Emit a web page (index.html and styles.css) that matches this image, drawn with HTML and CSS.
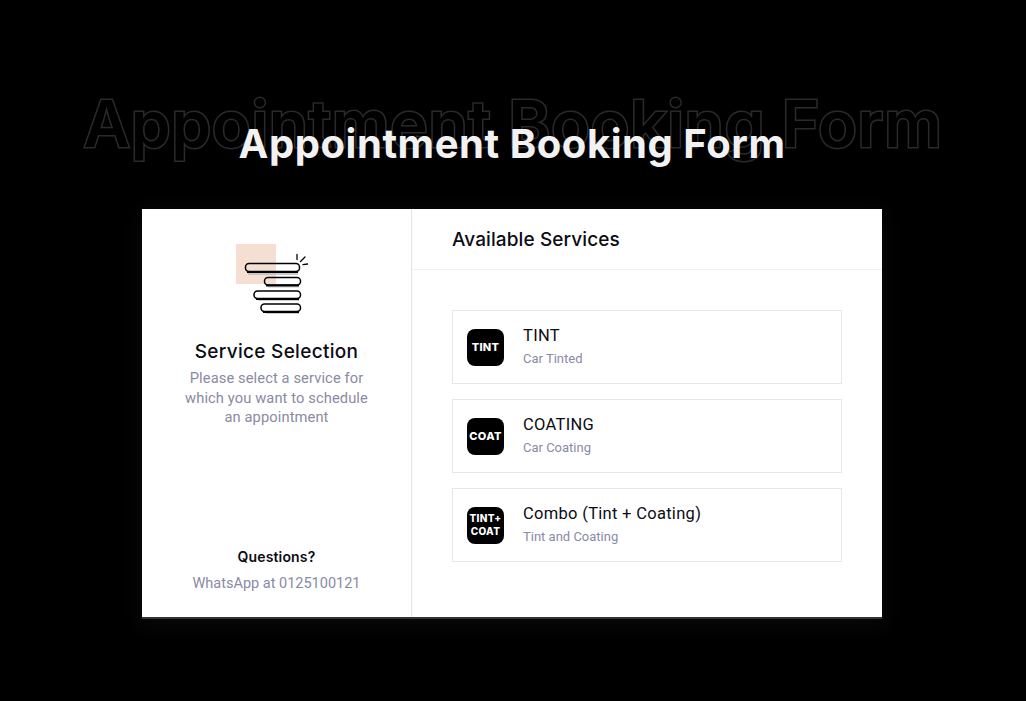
FILE: index.html
```html
<!DOCTYPE html>
<html lang="en">
<head>
<meta charset="utf-8">
<title>Appointment Booking Form</title>
<link rel="stylesheet" href="styles.css">
</head>
<body>
<main class="page">
  <header class="title-block">
    <div class="title-ghost" aria-hidden="true">Appointment Booking Form</div>
    <h1 class="title">Appointment Booking Form</h1>
  </header>
  <section class="card">
    <aside class="side">
      <div class="side-top">
        <svg class="side-icon" width="76" height="72" viewBox="0 0 76 72" aria-hidden="true">
          <rect x="0" y="0" width="40" height="40" fill="#f5dfd3"/>
          <path d="M12 30H62" stroke="#bbb" stroke-width="1.500" fill="none"/>
          <path d="M32 43H63M22 56.500H63M30 69.500H63" stroke="#ccc" stroke-width="1.200" fill="none"/>
          <rect x="9.500" y="19.500" width="54" height="8" rx="3.500" fill="none" stroke="#000" stroke-width="1.500"/>
          <path d="M11 28H62" stroke="#000" stroke-width="2.200" fill="none"/>
          <rect x="28.500" y="33.500" width="36" height="7.500" rx="3.500" fill="none" stroke="#000" stroke-width="1.500"/>
          <path d="M30 41.500H63" stroke="#000" stroke-width="2" fill="none"/>
          <rect x="18" y="47" width="46.500" height="7.500" rx="3.500" fill="none" stroke="#000" stroke-width="1.500"/>
          <path d="M20 55H63" stroke="#000" stroke-width="2" fill="none"/>
          <rect x="25" y="60" width="39.500" height="7.500" rx="3.500" fill="none" stroke="#000" stroke-width="1.500"/>
          <path d="M27 68H63" stroke="#000" stroke-width="2" fill="none"/>
          <path d="M61 10.500V15.500M69 13L64.500 17.500M71.500 20L67 20.700" stroke="#000" stroke-width="1.300" stroke-linecap="round" fill="none"/>
        </svg>
        <h2 class="side-title">Service Selection</h2>
        <p class="side-text">Please select a service for which you want to schedule an appointment</p>
      </div>
      <div class="side-bottom">
        <h3 class="questions">Questions?</h3>
        <p class="whatsapp">WhatsApp at 0125100121</p>
      </div>
    </aside>
    <div class="content">
      <h2 class="content-head">Available Services</h2>
      <ul class="services">
        <li class="service">
          <div class="badge">TINT</div>
          <div class="service-text">
            <div class="service-name">TINT</div>
            <div class="service-sub">Car Tinted</div>
          </div>
        </li>
        <li class="service">
          <div class="badge">COAT</div>
          <div class="service-text">
            <div class="service-name">COATING</div>
            <div class="service-sub">Car Coating</div>
          </div>
        </li>
        <li class="service">
          <div class="badge badge-two">TINT+<br>COAT</div>
          <div class="service-text">
            <div class="service-name">Combo (Tint + Coating)</div>
            <div class="service-sub">Tint and Coating</div>
          </div>
        </li>
      </ul>
    </div>
  </section>
</main>
</body>
</html>
```
FILE: styles.css
```css
* { box-sizing: border-box; }
html, body { margin: 0; padding: 0; }
body {
  background: #000;
  height: 701px;
  overflow: hidden;
  font-family: Roboto, "Liberation Sans", sans-serif;
}
.page { width: 1026px; padding-top: 84px; }
.title-block {
  position: relative;
  width: 1026px;
  height: 125px;
  text-align: center;
}
.title {
  position: relative;
  margin: 0;
  padding-top: 35px;
  padding-right: 2px;
  color: #f2f2f2;
  font: 700 40px/50px Inter, sans-serif;
  letter-spacing: 0.550px;
}
.title-ghost {
  position: absolute;
  left: 0;
  right: 0;
  top: 0;
  color: #000;
  -webkit-text-stroke: 3px #2a2a2a;
  paint-order: stroke fill;
  font: 600 64px/80px Inter, sans-serif;
  letter-spacing: 0.620px;
  white-space: nowrap;
}
.card {
  display: flex;
  width: 740px;
  height: 410px;
  margin-left: 142px;
  background: #fff;
  border-bottom: 2px solid #333;
  box-shadow: 0 4px 24px rgba(255, 255, 255, 0.05);
}
.side {
  width: 270px;
  flex: none;
  border-right: 1px solid #e3e3e3;
  display: flex;
  flex-direction: column;
  justify-content: space-between;
  align-items: center;
  text-align: center;
  padding: 35px 36px 23px;
}
.side-top { display: flex; flex-direction: column; align-items: center; }
.side-icon { display: block; margin-left: -5px; }
.side-title {
  margin: 24px 0 0;
  color: #0c0c14;
  font: 500 19px/24px Inter, sans-serif;
  letter-spacing: 0.300px;
}
.side-text {
  margin: 5px 0 0;
  color: #8a8aa2;
  font-size: 14.700px;
  line-height: 19.500px;
  letter-spacing: 0.100px;
}
.questions {
  margin: 0;
  color: #0c0c14;
  font: 600 14px/20px Inter, sans-serif;
  letter-spacing: 0.150px;
}
.whatsapp {
  margin: 7px 0 0;
  color: #8a8aa8;
  font-size: 14.500px;
  line-height: 20px;
}
.content { flex: 1; min-width: 0; }
.content-head {
  margin: 0;
  height: 61px;
  padding: 0 40px;
  border-bottom: 1px solid #f0f0f4;
  color: #0c0c14;
  font: 500 19px/62px Inter, sans-serif;
  letter-spacing: 0.100px;
}
.services {
  list-style: none;
  margin: 0;
  padding: 40px 40px 0;
  display: flex;
  flex-direction: column;
  gap: 15px;
}
.service {
  display: flex;
  align-items: center;
  gap: 19px;
  height: 74px;
  padding: 0 14px;
  border: 1px solid #e6e6ec;
}
.service-text { padding-bottom: 2px; }
.badge {
  width: 37px;
  height: 37px;
  flex: none;
  display: flex;
  align-items: center;
  justify-content: center;
  text-align: center;
  background: #000;
  border-radius: 8px;
  color: #fff;
  font: 800 11px/14px Inter, sans-serif;
  letter-spacing: 0.300px;
}
.badge-two { font-size: 10px; line-height: 13.500px; }
.service-name {
  color: #0c0c14;
  font-size: 16.500px;
  line-height: 22px;
  letter-spacing: 0.300px;
}
.service-sub {
  margin-top: 3px;
  color: #8a8aa8;
  font-size: 13px;
  line-height: 18px;
}
```
